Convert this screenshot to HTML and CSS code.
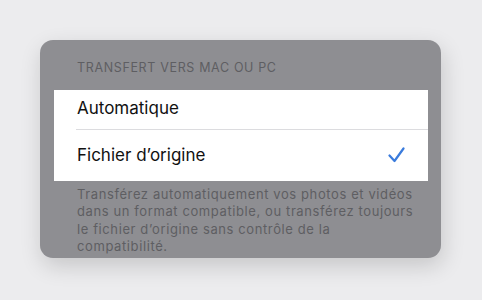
FILE: index.html
```html
<!DOCTYPE html>
<html>
<head>
  <meta charset="UTF-8">
  <title>Transfert vers Mac ou PC</title>
  <link rel="stylesheet" href="styles.css">
</head>
<body>
  <div class="sheet">
    <div class="section-title">TRANSFERT VERS MAC OU PC</div>
    <div class="list">
      <div class="row row-first">
        <span class="row-label">Automatique</span>
      </div>
      <div class="row row-last">
        <span class="row-label">Fichier d’origine</span>
        <svg class="check" width="17" height="16" viewBox="0 0 17 16">
          <path d="M1.5 8.5 L6.5 14 L15.5 1.5" fill="none" stroke="#3a7bdc" stroke-width="2.2" stroke-linecap="round" stroke-linejoin="round"/>
        </svg>
      </div>
    </div>
    <div class="section-footer">
      Transférez automatiquement vos photos et vidéos<br>
      dans un format compatible, ou transférez toujours<br>
      le fichier d’origine sans contrôle de la<br>
      compatibilité.
    </div>
  </div>
</body>
</html>
```

FILE: styles.css
```css
body {
  margin: 0;
  padding: 40px 0 0 40px;
  background: #ececee;
  font-family: Inter, "Noto Sans", sans-serif;
  width: 482px;
  height: 300px;
  box-sizing: border-box;
  overflow: hidden;
}
.sheet {
  width: 401px;
  height: 218px;
  box-sizing: border-box;
  background: #8e8e92;
  border-radius: 13px;
  box-shadow: 2px 8px 22px rgba(0,0,0,0.16);
  padding: 0 13px 0 14px;
  overflow: hidden;
}
.section-title {
  padding: 20px 0 0 23px;
  margin-bottom: 14px;
  font-size: 12.5px;
  line-height: 16px;
  color: #5e5e62;
  letter-spacing: 0.65px;
}
.list {
  background: #fff;
}
.row {
  display: flex;
  align-items: center;
  justify-content: space-between;
  margin-left: 22px;
  padding-right: 23px;
  font-size: 17px;
  line-height: 22px;
  color: #111;
}
.row-first {
  padding-top: 7px;
  padding-bottom: 10px;
  border-bottom: 1px solid #dcdcdf;
}
.row-last {
  padding-top: 14px;
  padding-bottom: 15px;
}
.row-label {
  padding-left: 1px;
}
.check {
  display: block;
}
.section-footer {
  padding: 5px 0 0 23px;
  font-size: 13px;
  line-height: 17.3px;
  color: #5e5e62;
  letter-spacing: 0.6px;
  white-space: nowrap;
}
```
